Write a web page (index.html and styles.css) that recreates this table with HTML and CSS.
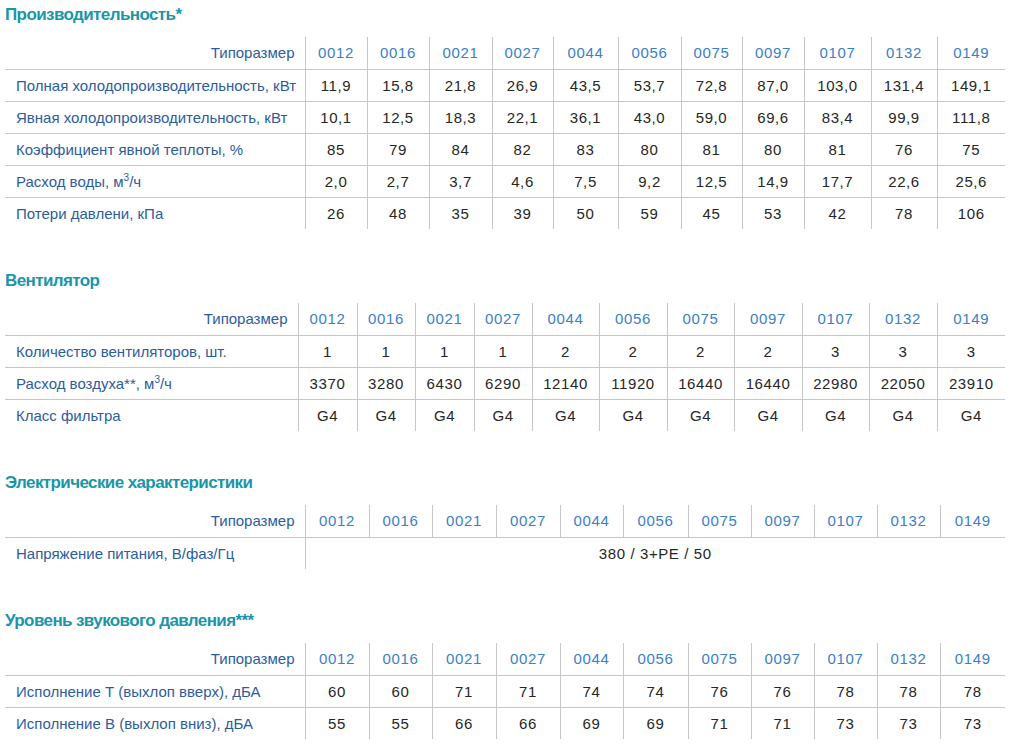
FILE: index.html
```html
<!DOCTYPE html>
<html lang="ru">
<head>
<meta charset="utf-8">
<title>Технические характеристики</title>
<link rel="stylesheet" href="styles.css">
</head>
<body>
<h2 class="sec sec-first">Производительность*</h2>
<table class="spec t-a">
  <colgroup>
    <col class="w300"><col class="w62"><col class="w62"><col class="w63"><col class="w61"><col class="w65"><col class="w63"><col class="w61"><col class="w62"><col class="w67"><col class="w66"><col class="w68">
  </colgroup>
  <thead>
    <tr><th class="lbl">Типоразмер</th><th>0012</th><th>0016</th><th>0021</th><th>0027</th><th>0044</th><th>0056</th><th>0075</th><th>0097</th><th>0107</th><th>0132</th><th>0149</th></tr>
  </thead>
  <tbody>
    <tr><td class="lbl">Полная холодопроизводительность, кВт</td><td>11,9</td><td>15,8</td><td>21,8</td><td>26,9</td><td>43,5</td><td>53,7</td><td>72,8</td><td>87,0</td><td>103,0</td><td>131,4</td><td>149,1</td></tr>
    <tr><td class="lbl">Явная холодопроизводительность, кВт</td><td>10,1</td><td>12,5</td><td>18,3</td><td>22,1</td><td>36,1</td><td>43,0</td><td>59,0</td><td>69,6</td><td>83,4</td><td>99,9</td><td>111,8</td></tr>
    <tr><td class="lbl">Коэффициент явной теплоты, %</td><td>85</td><td>79</td><td>84</td><td>82</td><td>83</td><td>80</td><td>81</td><td>80</td><td>81</td><td>76</td><td>75</td></tr>
    <tr><td class="lbl">Расход воды, м<sup>3</sup>/ч</td><td>2,0</td><td>2,7</td><td>3,7</td><td>4,6</td><td>7,5</td><td>9,2</td><td>12,5</td><td>14,9</td><td>17,7</td><td>22,6</td><td>25,6</td></tr>
    <tr><td class="lbl">Потери давлени, кПа</td><td>26</td><td>48</td><td>35</td><td>39</td><td>50</td><td>59</td><td>45</td><td>53</td><td>42</td><td>78</td><td>106</td></tr>
  </tbody>
</table>

<h2 class="sec">Вентилятор</h2>
<table class="spec t-b">
  <colgroup>
    <col class="w293"><col class="w59"><col class="w58"><col class="w59"><col class="w58"><col class="w67"><col class="w68"><col class="w67"><col class="w68"><col class="w67"><col class="w68"><col class="w68">
  </colgroup>
  <thead>
    <tr><th class="lbl">Типоразмер</th><th>0012</th><th>0016</th><th>0021</th><th>0027</th><th>0044</th><th>0056</th><th>0075</th><th>0097</th><th>0107</th><th>0132</th><th>0149</th></tr>
  </thead>
  <tbody>
    <tr><td class="lbl">Количество вентиляторов, шт.</td><td>1</td><td>1</td><td>1</td><td>1</td><td>2</td><td>2</td><td>2</td><td>2</td><td>3</td><td>3</td><td>3</td></tr>
    <tr><td class="lbl">Расход воздуха**, м<sup>3</sup>/ч</td><td>3370</td><td>3280</td><td>6430</td><td>6290</td><td>12140</td><td>11920</td><td>16440</td><td>16440</td><td>22980</td><td>22050</td><td>23910</td></tr>
    <tr><td class="lbl">Класс фильтра</td><td>G4</td><td>G4</td><td>G4</td><td>G4</td><td>G4</td><td>G4</td><td>G4</td><td>G4</td><td>G4</td><td>G4</td><td>G4</td></tr>
  </tbody>
</table>

<h2 class="sec">Электрические характеристики</h2>
<table class="spec t-c">
  <colgroup>
    <col class="w300"><col class="w64"><col class="w63"><col class="w64"><col class="w64"><col class="w63"><col class="w65"><col class="w63"><col class="w63"><col class="w63"><col class="w63"><col class="w65">
  </colgroup>
  <thead>
    <tr><th class="lbl">Типоразмер</th><th>0012</th><th>0016</th><th>0021</th><th>0027</th><th>0044</th><th>0056</th><th>0075</th><th>0097</th><th>0107</th><th>0132</th><th>0149</th></tr>
  </thead>
  <tbody>
    <tr><td class="lbl">Напряжение питания, В/фаз/Гц</td><td colspan="11">380 / 3+PE / 50</td></tr>
  </tbody>
</table>

<h2 class="sec">Уровень звукового давления***</h2>
<table class="spec t-d">
  <colgroup>
    <col class="w300"><col class="w64"><col class="w63"><col class="w64"><col class="w64"><col class="w63"><col class="w65"><col class="w63"><col class="w63"><col class="w63"><col class="w63"><col class="w65">
  </colgroup>
  <thead>
    <tr><th class="lbl">Типоразмер</th><th>0012</th><th>0016</th><th>0021</th><th>0027</th><th>0044</th><th>0056</th><th>0075</th><th>0097</th><th>0107</th><th>0132</th><th>0149</th></tr>
  </thead>
  <tbody>
    <tr><td class="lbl">Исполнение Т (выхлоп вверх), дБА</td><td>60</td><td>60</td><td>71</td><td>71</td><td>74</td><td>74</td><td>76</td><td>76</td><td>78</td><td>78</td><td>78</td></tr>
    <tr><td class="lbl">Исполнение В (выхлоп вниз), дБА</td><td>55</td><td>55</td><td>66</td><td>66</td><td>69</td><td>69</td><td>71</td><td>71</td><td>73</td><td>73</td><td>73</td></tr>
  </tbody>
</table>
</body>
</html>
```

FILE: styles.css
```css
html, body {
  background: #ffffff;
}
body {
  margin: 5px;
  font-family: "Liberation Sans", Arial, sans-serif;
  font-size: 15px;
  color: #262626;
}
.sec {
  margin: 42px 0 12px 0;
  font-size: 17px;
  line-height: 20px;
  font-weight: bold;
  color: #1996a9;
  letter-spacing: -0.6px;
}
.sec-first {
  margin-top: 0;
}
.spec {
  width: 1000px;
  table-layout: fixed;
  border-collapse: collapse;
}
.spec th,
.spec td {
  padding: 0;
  text-align: center;
  vertical-align: middle;
  white-space: nowrap;
  letter-spacing: 0.6px;
  border-left: 1px solid #c6c6c6;
}
.spec th:first-child,
.spec td:first-child {
  border-left: none;
}
.spec th {
  font-weight: normal;
  color: #3a80c6;
  height: 32px;
  line-height: 32px;
}
.spec th.lbl {
  text-align: right;
  padding-right: 10px;
  letter-spacing: 0;
  color: #2c5ca0;
}
.spec td {
  height: 31px;
  line-height: 31px;
  border-top: 1px solid #c6c6c6;
}
.spec td.lbl {
  text-align: left;
  padding-left: 11px;
  letter-spacing: 0;
  color: #2c5ca0;
}
.spec sup {
  font-size: 10px;
  line-height: 0;
  vertical-align: 6px;
}
.w293 { width: 293px; }
.w300 { width: 300px; }
.w58 { width: 58px; }
.w59 { width: 59px; }
.w61 { width: 61px; }
.w62 { width: 62px; }
.w63 { width: 63px; }
.w64 { width: 64px; }
.w65 { width: 65px; }
.w66 { width: 66px; }
.w67 { width: 67px; }
.w68 { width: 68px; }
```
